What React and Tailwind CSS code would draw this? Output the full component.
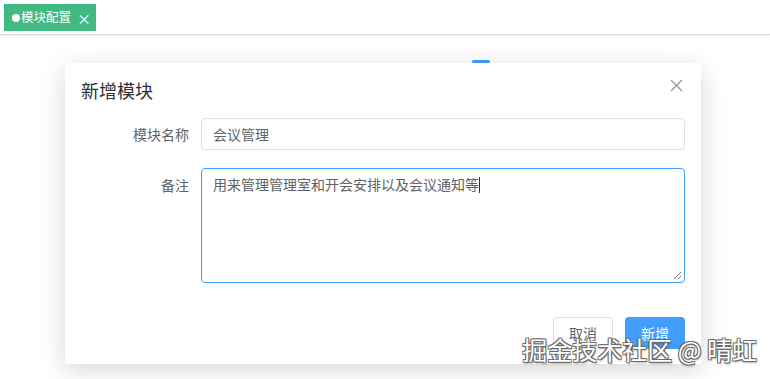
import React from 'react';

const font = { fontFamily: '"Noto Sans CJK SC", "Noto Sans", sans-serif' };

const App = () => {
  return (
    <div className="relative w-[770px] h-[379px] overflow-hidden bg-white" style={font}>
      {/* Tabs bar */}
      <div className="h-[35px] bg-white border-b border-[#d8dce5] shadow-[0_1px_3px_rgba(0,0,0,0.08)] flex items-start pl-[4px] pt-[4px]">
        <div className="h-[27px] pl-[8px] pr-[5px] bg-[#42b983] text-white text-[12.5px] flex items-center">
          <span className="w-[8px] h-[8px] rounded-full bg-white mr-[1px]"></span>
          <span>模块配置</span>
          <span className="ml-[6px] text-[14px] leading-none">×</span>
        </div>
      </div>

      {/* Partially hidden element behind the dialog */}
      <div className="absolute left-[472px] top-[60px] w-[18px] h-[3px] rounded-full bg-[#409eff]"></div>

      {/* Dialog */}
      <div className="relative pl-[65px] pt-[28px]">
        <div className="w-[636px] h-[301px] bg-white rounded-[2px] shadow-[0_6px_26px_rgba(0,0,0,0.16)] px-[16px] pt-[15px]">
          <div className="flex items-center justify-between h-[24px]">
            <span className="text-[18px] text-[#303133] leading-[24px]">新增模块</span>
            <svg width="13" height="13" viewBox="0 0 13 13" className="mr-[2px] -mt-[10px]">
              <path d="M1 1L12 12M12 1L1 12" stroke="#909399" strokeWidth="1.2" />
            </svg>
          </div>

          <div className="mt-[16px] flex flex-col gap-[18px]">
            <div className="flex items-center">
              <label className="w-[120px] pr-[12px] text-right text-[14px] text-[#606266]">模块名称</label>
              <div className="flex-1 h-[32px] border border-[#dcdfe6] rounded-[4px] px-[11px] flex items-center text-[14px] text-[#606266]">
                会议管理
              </div>
            </div>
            <div className="flex items-start">
              <label className="w-[120px] pr-[12px] pt-[7px] text-right text-[14px] text-[#606266]">备注</label>
              <div className="relative flex-1 h-[115px] border border-[#409eff] rounded-[4px] px-[11px] pt-[5px] text-[14px] leading-[20px] text-[#606266]">
                用来管理管理室和开会安排以及会议通知等
                <span className="inline-block w-[1px] h-[16px] bg-[#303133] align-middle -mt-[2px]"></span>
                <svg width="9" height="9" viewBox="0 0 9 9" className="absolute right-[2px] bottom-[2px]">
                  <path d="M8 1L1 8M8 5L5 8" stroke="#777" strokeWidth="1" />
                </svg>
              </div>
            </div>
          </div>

          <div className="mt-[34px] flex justify-end gap-[12px]">
            <button className="w-[60px] h-[32px] rounded-[4px] border border-[#dcdfe6] bg-white text-[14px] text-[#606266]">取消</button>
            <button className="w-[60px] h-[32px] rounded-[4px] bg-[#409eff] text-[14px] text-white">新增</button>
          </div>
        </div>
      </div>

      {/* Watermark */}
      <div className="absolute right-[13px] top-[333px] text-[25px] leading-[32px] text-white [text-shadow:1px_1px_0_#6b6b6b,-1px_-1px_0_#6b6b6b,1px_-1px_0_#6b6b6b,-1px_1px_0_#6b6b6b,1px_2px_2px_rgba(0,0,0,0.3)]">
        掘金技术社区 @ 晴虹
      </div>
    </div>
  );
};

export default App;
